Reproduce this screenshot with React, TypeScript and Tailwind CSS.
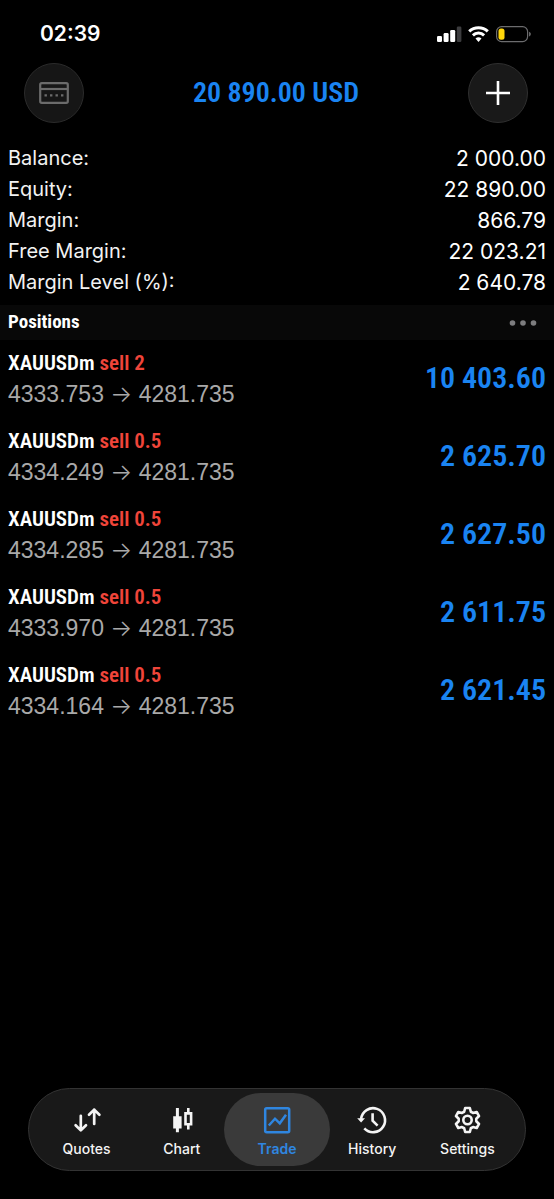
import React from "react";

const CONDENSED = "font-['Roboto_Condensed','Liberation_Sans_Narrow','Roboto',sans-serif]";

const summary = [
  ["Balance:", "2 000.00"],
  ["Equity:", "22 890.00"],
  ["Margin:", "866.79"],
  ["Free Margin:", "22 023.21"],
  ["Margin Level (%):", "2 640.78"],
];

const positions = [
  { volume: "2", open: "4333.753", profit: "10 403.60" },
  { volume: "0.5", open: "4334.249", profit: "2 625.70" },
  { volume: "0.5", open: "4334.285", profit: "2 627.50" },
  { volume: "0.5", open: "4333.970", profit: "2 611.75" },
  { volume: "0.5", open: "4334.164", profit: "2 621.45" },
];

function StatusIcons() {
  return (
    <svg width="96" height="18" viewBox="0 0 96 18" aria-hidden="true">
      <g fill="#fff">
        <rect x="1" y="11" width="5" height="6" rx="1.3" />
        <rect x="7.6" y="8" width="5" height="9" rx="1.3" />
        <rect x="14.2" y="5" width="5" height="12" rx="1.3" />
        <rect x="20.8" y="1.5" width="4.6" height="15.5" rx="1.3" fill="#3c3c3e" />
      </g>
      <g fill="none" stroke="#fff" strokeWidth="3">
        <path d="M33.2 6.4a13.4 13.4 0 0 1 18.6 0" />
        <path d="M36.9 10.4a8 8 0 0 1 11.2 0" />
      </g>
      <path d="M39.5 13.6a4.6 4.6 0 0 1 6 0L42.5 17Z" fill="#fff" />
      <rect x="60.6" y="1.6" width="31" height="15" rx="5" fill="none" stroke="#6c6c6e" strokeWidth="1.2" />
      <path d="M93.2 6.8c2 .8 2 3.8 0 4.6Z" fill="#7c7c7e" />
      <rect x="62.5" y="3.5" width="6" height="11.2" rx="2.5" fill="#ffd60a" />
    </svg>
  );
}

function QuotesIcon() {
  return (
    <svg width="32" height="32" viewBox="0 0 32 32" fill="none" stroke="currentColor" strokeWidth="2.7" strokeLinejoin="round" strokeLinecap="round" aria-hidden="true">
      <path d="M9.8 11.8v14.5M4.6 21.2l5.2 5.2 5.2-5.2M23.2 20V5.6M18 10.8l5.2-5.2 5.2 5.2" />
    </svg>
  );
}

function ChartIcon() {
  return (
    <svg width="32" height="32" viewBox="0 0 32 32" aria-hidden="true">
      <path d="M7.2 12.2h2.7V4h3v8.2h2.7v12.2h-2.7v3.8h-3v-3.8H7.2Z" fill="currentColor" />
      <path d="M22.3 4v5M22.3 21v4.5M19.5 9.4h5.6v10.8h-5.6Z" fill="none" stroke="currentColor" strokeWidth="2.6" />
    </svg>
  );
}

function TradeIcon() {
  return (
    <svg width="32" height="32" viewBox="0 0 32 32" fill="none" stroke="currentColor" strokeWidth="2.5" aria-hidden="true">
      <rect x="4.2" y="4.2" width="24" height="24" rx="1.5" />
      <path d="M7.8 21.5l6.2-6.8 4.8 4.6 6.2-8.6" />
    </svg>
  );
}

function HistoryIcon() {
  return (
    <svg width="32" height="32" viewBox="0 0 32 32" fill="none" stroke="currentColor" strokeWidth="2.6" aria-hidden="true">
      <path d="M5.1 15A12 12 0 1 1 8.3 24.4" />
      <path d="M1.2 14.2h7.8l-3.9 4.3Z" fill="currentColor" stroke="none" />
      <path d="M16.6 9.3v7.5l5 4.8" />
    </svg>
  );
}

const gearPoints = [0, 60, 120, 180, 240, 300]
  .flatMap((tooth) => [
    [tooth - 22, 8.9],
    [tooth - 11, 12.2],
    [tooth + 11, 12.2],
    [tooth + 22, 8.9],
  ])
  .map(([deg, r]) => {
    const a = (deg * Math.PI) / 180;
    return `${(16.5 + r * Math.sin(a)).toFixed(2)},${(16 - r * Math.cos(a)).toFixed(2)}`;
  })
  .join(" ");

function SettingsIcon() {
  return (
    <svg width="32" height="32" viewBox="0 0 32 32" fill="none" stroke="currentColor" strokeWidth="2.6" strokeLinejoin="round" aria-hidden="true">
      <polygon points={gearPoints} />
      <circle cx="16.5" cy="16" r="4.2" />
    </svg>
  );
}

const tabs = [
  { label: "Quotes", Icon: QuotesIcon },
  { label: "Chart", Icon: ChartIcon },
  { label: "Trade", Icon: TradeIcon },
  { label: "History", Icon: HistoryIcon },
  { label: "Settings", Icon: SettingsIcon },
];

export default function App() {
  return (
    <div className="flex min-h-screen flex-col bg-black font-['Inter',sans-serif] text-white">
      <div className="flex items-center justify-between pt-5 pr-[22px] pl-10">
        <time className="text-[21px] leading-7 font-semibold">02:39</time>
        <StatusIcons />
      </div>

      <header className="flex items-center justify-between pt-[15px] pr-[26px] pl-6">
        <button aria-label="Deposit" className="grid size-15 place-items-center rounded-full border border-[#2b2b2b] bg-[#161616] text-[#6b6b6b]">
          <svg width="32" height="24" viewBox="0 0 32 24" fill="none" stroke="currentColor" strokeWidth="2.2" aria-hidden="true">
            <rect x="2.2" y="2.2" width="27.6" height="19.6" rx="1.5" />
            <path d="M2 8h28" />
            <path d="M6.5 14.3h2.4M12 14.3h2.4M17.5 14.3h2.4M23 14.3h2.4" />
          </svg>
        </button>
        <h1 className={`${CONDENSED} text-[28px] leading-8 font-semibold text-[#1a84f2]`}>20 890.00 USD</h1>
        <button aria-label="New order" className="grid size-15 place-items-center rounded-full border border-[#2f2f2f] bg-[#191919]">
          <svg width="26" height="26" viewBox="0 0 26 26" stroke="#fff" strokeWidth="2.6" aria-hidden="true">
            <path d="M13 1v24M1 13h24" />
          </svg>
        </button>
      </header>

      <dl className="px-2 pt-5 leading-[31px]">
        {summary.map(([label, value]) => (
          <div key={label} className="flex items-center justify-between">
            <dt className="text-[20px] text-[#f2f2f2]">{label}</dt>
            <dd className="text-[21px]">{value}</dd>
          </div>
        ))}
      </dl>

      <section className="flex-1">
        <div className="mt-[7px] flex h-[35px] items-center justify-between bg-[#080808] pr-4 pl-2">
          <h2 className={`${CONDENSED} text-[19px] font-bold`}>Positions</h2>
          <button aria-label="More" className="text-[#7d7d7f]">
            <svg width="30" height="8" viewBox="0 0 30 8" fill="currentColor" aria-hidden="true">
              <circle cx="4.5" cy="4" r="2.8" />
              <circle cx="15" cy="4" r="2.8" />
              <circle cx="25.5" cy="4" r="2.8" />
            </svg>
          </button>
        </div>
        <ul>
          {positions.map((p) => (
            <li key={p.open} className="flex h-[78px] items-center justify-between px-2">
              <div className="leading-[31px]">
                <p className={`${CONDENSED} text-[21px] font-semibold`}>
                  XAUUSDm <span className="text-[#f0453a]">sell {p.volume}</span>
                </p>
                <p className="font-['Liberation_Sans',sans-serif] text-[23px] text-[#a9a9a9]">
                  {p.open} <span className="font-['Inter',sans-serif] font-light">→</span> 4281.735
                </p>
              </div>
              <span className={`${CONDENSED} pb-1 text-[30px] font-semibold text-[#1a84f2]`}>{p.profit}</span>
            </li>
          ))}
        </ul>
      </section>

      <nav className="mx-7 mb-7 grid h-[83px] grid-cols-5 rounded-full border border-[#333] bg-[#191919] px-[10px] py-1">
        {tabs.map(({ label, Icon }) => (
          <a
            key={label}
            href={`#${label.toLowerCase()}`}
            aria-current={label === "Trade" ? "page" : undefined}
            className={
              label === "Trade"
                ? "-mx-[5px] flex flex-col items-center justify-center gap-[3px] rounded-full bg-[#3a3a3a] pt-[3px] text-[14px] leading-5 font-semibold text-[#2f86e0]"
                : "flex flex-col items-center justify-center gap-[3px] pt-[3px] text-[14px] leading-5 font-medium text-[#f4f4f4]"
            }
          >
            <Icon />
            {label}
          </a>
        ))}
      </nav>
    </div>
  );
}
